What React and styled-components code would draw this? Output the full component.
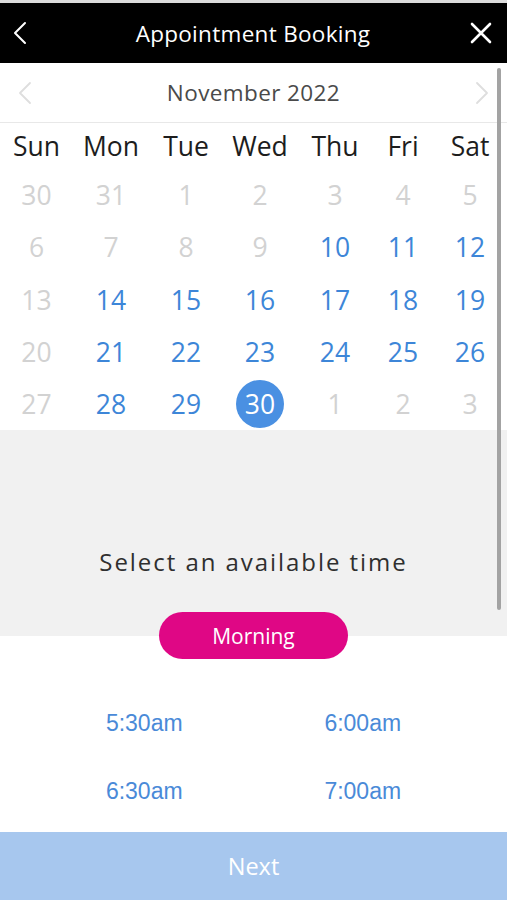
import React from "react";
import styled, { createGlobalStyle } from "styled-components";

const Global = createGlobalStyle`
  html, body { margin: 0; padding: 0; background: #fff; }
  body { font-family: "Open Sans", "Noto Sans", sans-serif; }
  * { box-sizing: border-box; }
`;

const Page = styled.div`
  width: 507px;
  height: 900px;
  display: flex;
  flex-direction: column;
  overflow: hidden;
  background: #fff;
`;

const Header = styled.header`
  height: 63px;
  border-top: 3px solid #dcdcdc;
  background: #000;
  display: grid;
  grid-template-columns: 1fr auto 1fr;
  align-items: center;
  padding: 0 14px 0 13px;
  color: #fff;
`;

const Title = styled.h1`
  margin: 0;
  font-size: 22.5px;
  font-weight: 400;
  letter-spacing: 0.3px;
`;

const IconButton = styled.button`
  justify-self: ${(p) => (p.$end ? "end" : "start")};
  width: 24px;
  height: 30px;
  padding: 0;
  border: 0;
  background: transparent;
  display: flex;
  align-items: center;
  justify-content: ${(p) => (p.$end ? "center" : "flex-start")};
`;

const Scroll = styled.div`
  position: relative;
  flex: 1;
  display: flex;
  flex-direction: column;
`;

const ScrollThumb = styled.div`
  position: absolute;
  right: 6px;
  top: 5px;
  width: 4px;
  height: 542px;
  border-radius: 2px;
  background: #a3a3a3;
`;

const MonthNav = styled.div`
  height: 60px;
  border-bottom: 1px solid #e8e8e8;
  display: flex;
  align-items: center;
  justify-content: space-between;
  padding: 0 18px 0 18px;
`;

const MonthLabel = styled.div`
  font-size: 22.5px;
  color: #4a4a4a;
  letter-spacing: 0.4px;
`;

const Grid = styled.div`
  display: grid;
  grid-template-columns: 73px 76px 74px 74px 76px 60px 1fr;
  grid-auto-rows: 52.3px;
  grid-template-rows: 46px;
`;

const DayName = styled.div`
  display: flex;
  align-items: center;
  justify-content: center;
  font-size: 26.5px;
  color: #1d1d1d;
`;

const DateCell = styled.div`
  display: flex;
  align-items: center;
  justify-content: center;
`;

const DateNum = styled.span`
  width: 48px;
  height: 48px;
  border-radius: 50%;
  display: flex;
  align-items: center;
  justify-content: center;
  font-size: 26.5px;
  color: ${(p) => (p.$selected ? "#fff" : p.$available ? "#3d86d8" : "#d2d2d2")};
  background: ${(p) => (p.$selected ? "#4a90e2" : "transparent")};
`;

const Prompt = styled.section`
  flex: none;
  height: 206px;
  background: #f1f1f1;
  display: flex;
  align-items: flex-end;
  justify-content: center;
  padding-bottom: 59px;
`;

const PromptText = styled.div`
  font-size: 24px;
  line-height: 30px;
  letter-spacing: 1.95px;
  color: #2f2f2f;
`;

const Pill = styled.div`
  align-self: center;
  position: relative;
  margin-top: -24px;
  width: 189px;
  height: 47px;
  border-radius: 24px;
  background: #df0785;
  color: #fff;
  font-size: 21px;
  display: flex;
  align-items: center;
  justify-content: center;
`;

const Times = styled.div`
  display: grid;
  grid-template-columns: 1fr 1fr;
  grid-auto-rows: 68px;
  padding: 30px 35px 0;
`;

const Time = styled.div`
  display: flex;
  align-items: center;
  justify-content: center;
  font-family: "Liberation Sans", Arial, sans-serif;
  font-size: 23px;
  color: #4a8ad8;
`;

const NextBar = styled.button`
  height: 68px;
  border: 0;
  background: #a7c7ee;
  color: #fff;
  font-family: "Open Sans", sans-serif;
  font-size: 23.5px;
  display: flex;
  align-items: center;
  justify-content: center;
  padding: 0;
`;

const Chevron = ({ dir = "left", color, w = 14, h = 24, sw = 2.2 }) => (
  <svg width={w} height={h} viewBox="0 0 14 24" fill="none">
    <path
      d={dir === "left" ? "M12 2 L2 12 L12 22" : "M2 2 L12 12 L2 22"}
      stroke={color}
      strokeWidth={sw}
      strokeLinecap="round"
      strokeLinejoin="round"
    />
  </svg>
);

const days = ["Sun", "Mon", "Tue", "Wed", "Thu", "Fri", "Sat"];
const dates = [
  [30, 0], [31, 0], [1, 0], [2, 0], [3, 0], [4, 0], [5, 0],
  [6, 0], [7, 0], [8, 0], [9, 0], [10, 1], [11, 1], [12, 1],
  [13, 0], [14, 1], [15, 1], [16, 1], [17, 1], [18, 1], [19, 1],
  [20, 0], [21, 1], [22, 1], [23, 1], [24, 1], [25, 1], [26, 1],
  [27, 0], [28, 1], [29, 1], [30, 2], [1, 0], [2, 0], [3, 0],
];

export default function App() {
  return (
    <>
      <Global />
      <Page>
        <Header>
          <IconButton aria-label="Back">
            <Chevron dir="left" color="#fff" w={14} h={24} sw={2} />
          </IconButton>
          <Title>Appointment Booking</Title>
          <IconButton $end aria-label="Close">
            <svg width="22" height="22" viewBox="0 0 22 22">
              <path d="M2 2 L20 20 M20 2 L2 20" stroke="#fff" strokeWidth="2.6" strokeLinecap="round" />
            </svg>
          </IconButton>
        </Header>
        <Scroll>
          <ScrollThumb />
          <MonthNav>
            <Chevron dir="left" color="#dedede" w={14} h={24} sw={1.8} />
            <MonthLabel>November 2022</MonthLabel>
            <Chevron dir="right" color="#dedede" w={14} h={24} sw={1.8} />
          </MonthNav>
          <Grid>
            {days.map((d) => (
              <DayName key={d}>{d}</DayName>
            ))}
            {dates.map(([n, s], i) => (
              <DateCell key={i}>
                <DateNum $available={s === 1} $selected={s === 2}>
                  {n}
                </DateNum>
              </DateCell>
            ))}
          </Grid>
          <Prompt>
            <PromptText>Select an available time</PromptText>
          </Prompt>
          <Pill>Morning</Pill>
          <Times>
            <Time>5:30am</Time>
            <Time>6:00am</Time>
            <Time>6:30am</Time>
            <Time>7:00am</Time>
          </Times>
        </Scroll>
        <NextBar>Next</NextBar>
      </Page>
    </>
  );
}
